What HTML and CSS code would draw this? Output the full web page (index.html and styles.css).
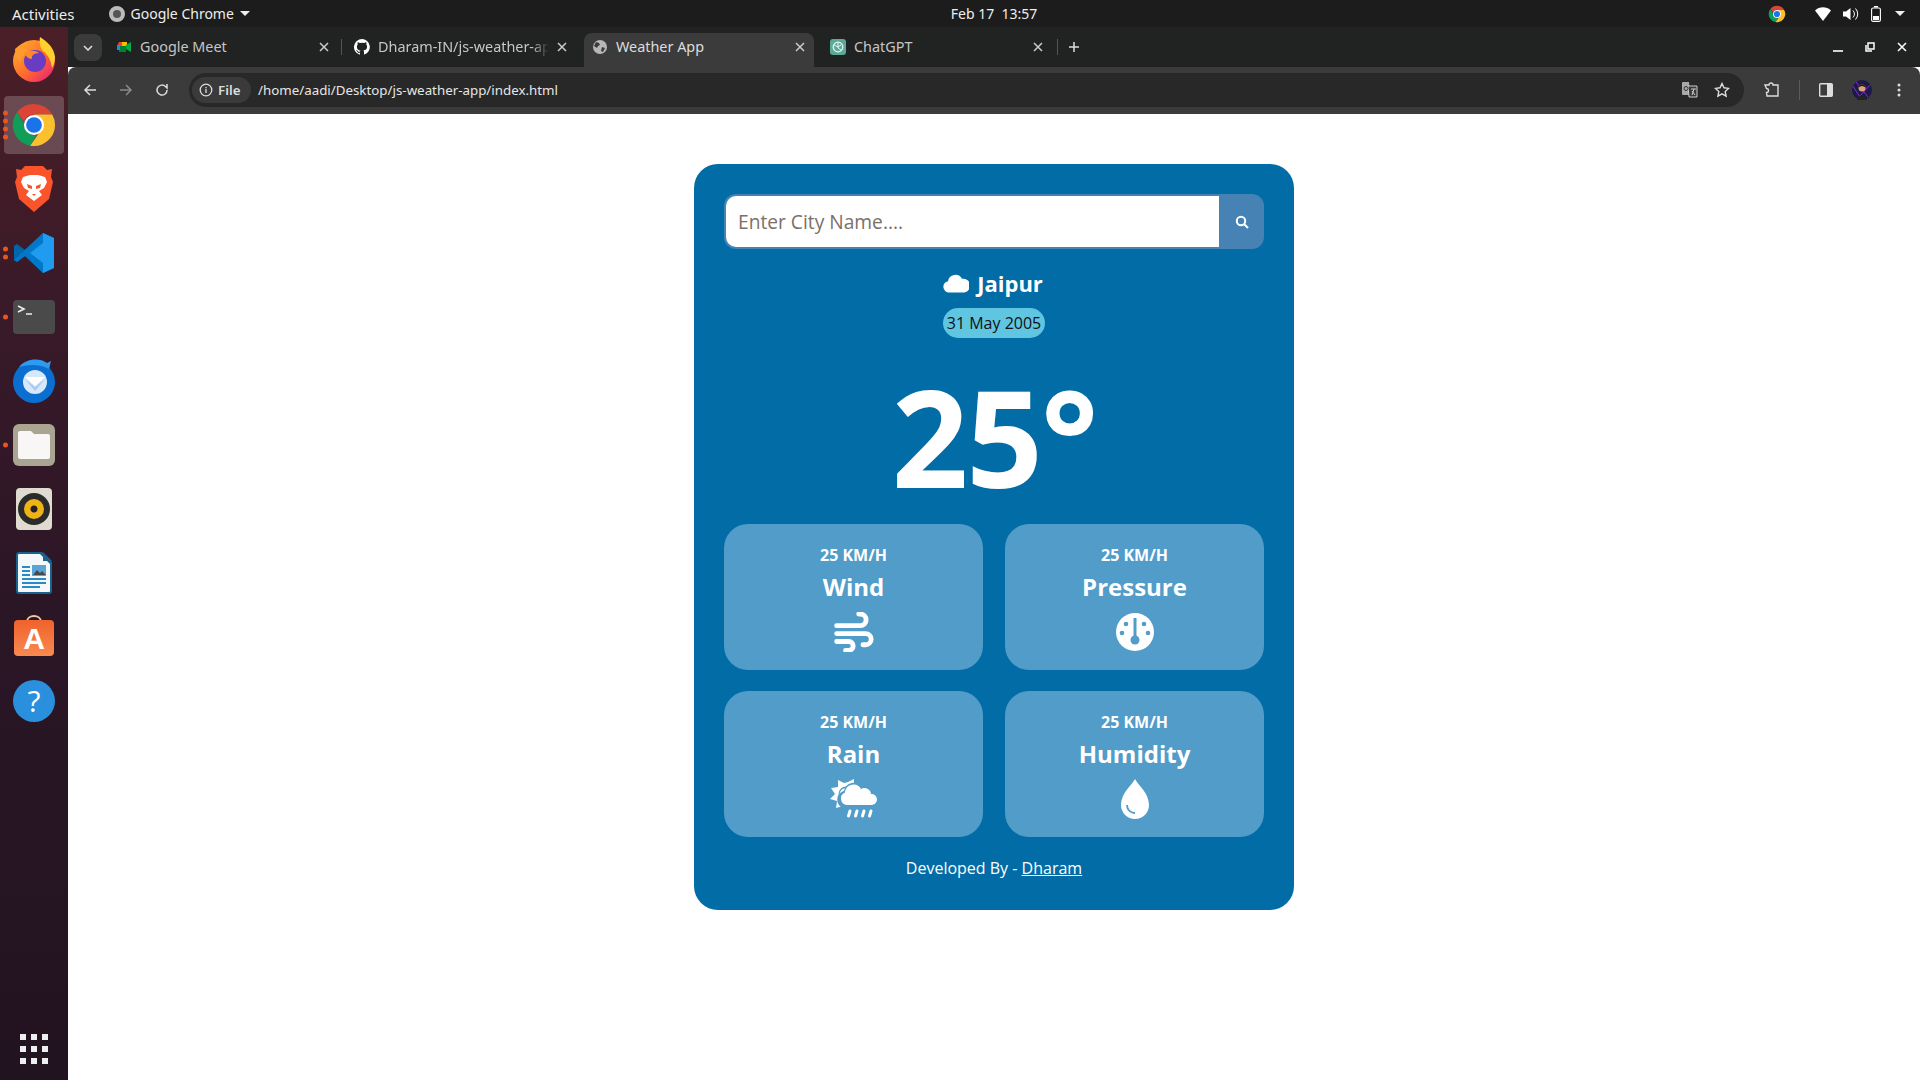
FILE: index.html
```html
<!DOCTYPE html>
<html lang="en">
<head>
    <meta charset="UTF-8">
    <meta name="viewport" content="width=device-width, initial-scale=1.0">
    <title>Weather App</title>
    <link rel="stylesheet" href="styles.css">
</head>
<body>

    <svg class="defs" width="0" height="0">
        <defs>
            <symbol id="chrome" viewBox="0 0 48 48">
                <path fill="#db4437" d="M24 2a22 22 0 0 1 19 11H24a11 11 0 0 0-10.500 7.500L6.500 10.500A22 22 0 0 1 24 2z"/>
                <path fill="#0f9d58" d="M6.500 10.500 15 25a10 10 0 0 0 11.500 9.700L20 45.600A22 22 0 0 1 6.500 10.500z"/>
                <path fill="#fbc02d" d="M43 13a22 22 0 0 1-23 32.600L29.500 32a11 11 0 0 0 .5-13l-6-6z"/>
                <circle cx="24" cy="24" r="10.500" fill="#fff"/>
                <circle cx="24" cy="24" r="8.200" fill="#1a73e8"/>
            </symbol>
            <symbol id="close" viewBox="0 0 10 10">
                <path d="M1 1l8 8M9 1l-8 8" fill="none" stroke="currentColor" stroke-width="1.500"/>
            </symbol>
            <linearGradient id="ff" x1="0" y1="0" x2="1" y2="1">
                <stop offset="0" stop-color="#ffb52e"/>
                <stop offset=".55" stop-color="#ff6a2c"/>
                <stop offset="1" stop-color="#e31587"/>
            </linearGradient>
            <linearGradient id="soft" x1="0" y1="0" x2="0" y2="1">
                <stop offset="0" stop-color="#f0622c"/>
                <stop offset="1" stop-color="#f98a50"/>
            </linearGradient>
        </defs>
    </svg>

    <header class="topbar">
        <span class="top-left">Activities</span>
        <span class="app-menu">
            <span class="app-dot"></span>
            Google Chrome
            <span class="caret"></span>
        </span>
        <span class="clock">Feb 17&nbsp; 13:57</span>
        <span class="tray">
            <svg class="tray-chrome" width="18" height="18"><use href="#chrome"/></svg>
            <svg class="tray-wifi" width="16" height="14" viewBox="0 0 16 14"><path fill="#fff" d="M0 3.500C4.500-.8 11.500-.8 16 3.500L8 14z"/></svg>
            <svg class="tray-vol" width="16" height="14" viewBox="0 0 16 14"><path fill="#fff" d="M0 4.500h3L7.500 1v12L3 9.500H0z"/><path d="M10 3.500a5 5 0 0 1 0 7M12.500 1.500a8 8 0 0 1 0 11" fill="none" stroke="#fff" stroke-width="1"/></svg>
            <svg class="tray-bat" width="10" height="16" viewBox="0 0 10 16"><path fill="#fff" d="M3 0h4v1.500H3z"/><rect x=".6" y="2" width="8.800" height="13.400" rx="1.500" fill="none" stroke="#fff" stroke-width="1.100"/><rect x="2" y="10" width="6" height="4" fill="#fff"/></svg>
            <span class="caret"></span>
        </span>
    </header>

    <div class="desktop">
        <nav class="dock">
            <div class="dock-item">
                <svg class="lift" width="48" height="48" viewBox="0 0 48 48">
                    <circle cx="24" cy="26" r="21" fill="url(#ff)"/>
                    <path fill="#ffd02e" d="M30 2c8 5 14 11 15 20 0 4-1 8-3 11-1-8-4-13-9-17-3-3-4-9-3-14z"/>
                    <path fill="#ff9a2e" d="M5 14c3-3 6-5 9-6-1 4 1 7 5 8-5 2-9 7-8 13-3-4-6-9-6-15z"/>
                    <circle cx="25" cy="26" r="11" fill="#6a3cc4"/>
                    <path fill="#ff8a2c" d="M14 18c5-3 12-3 15 0-5 0-8 3-7 6-3 0-6-2-8-6z"/>
                </svg>
            </div>
            <div class="dock-item active">
                <span class="pips"><i></i><i></i><i></i><i></i></span>
                <svg width="46" height="46"><use href="#chrome"/></svg>
            </div>
            <div class="dock-item">
                <svg width="38" height="48" viewBox="0 0 38 48">
                    <path fill="#fb542b" d="M10 1h18l4 4 5-1-1 8 2 5-4 17-15 13L4 34 0 17l2-5-1-8 5 1z"/>
                    <path fill="#fff" d="M8 12l7-2h8l7 2 2 5-3 6-5 3 3 4-8 6-8-6 3-4-5-3-3-6z"/>
                    <path fill="#fb542b" d="M12 19l5 2v3l-4-1zM26 19l-5 2v3l4-1zM17 29h4l-2 2z"/>
                </svg>
            </div>
            <div class="dock-item">
                <span class="pips"><i></i><i></i></span>
                <svg width="42" height="42" viewBox="0 0 42 42">
                    <path fill="#0065a9" d="M30 1 12 18 4 12 1 14v14l3 2 8-6 18 17z"/>
                    <path fill="#007acc" d="M30 1 41 6v30l-11 5-18-17L4 30l-3-2 29-27z" opacity=".9"/>
                    <path fill="#1f9cf0" d="M30 1l11 5v30l-11 5zM30 11 17 21l13 10z"/>
                </svg>
            </div>
            <div class="dock-item">
                <span class="pips"><i></i></span>
                <div class="term">
                    <svg width="40" height="40" viewBox="0 0 40 40"><path d="M5 6l6 3-6 3M13 14h6" fill="none" stroke="#eee" stroke-width="1.600"/></svg>
                </div>
            </div>
            <div class="dock-item">
                <svg class="lift-small" width="46" height="46" viewBox="0 0 46 46">
                    <circle cx="23" cy="25" r="21" fill="#0a6fd0"/>
                    <path fill="#2f9bf0" d="M8 10c6-8 20-10 28-4l4-2-2 8c-8-5-20-5-30-2z"/>
                    <circle cx="24" cy="25" r="12" fill="#d7e8fb"/>
                    <path fill="#fff" d="M14 20h20l-10 9z"/>
                    <path fill="#a8c8ef" d="M14 22l10 8 10-8-10 12z"/>
                </svg>
            </div>
            <div class="dock-item">
                <span class="pips"><i></i></span>
                <div class="files">
                    <svg width="32" height="28" viewBox="0 0 32 28"><path fill="#f8f7f5" d="M2 0h11l3 3h14a2 2 0 0 1 2 2v21a2 2 0 0 1-2 2H2a2 2 0 0 1-2-2V2a2 2 0 0 1 2-2z"/></svg>
                </div>
            </div>
            <div class="dock-item">
                <div class="rhythm"><span class="rhythm-cone"></span></div>
            </div>
            <div class="dock-item">
                <svg width="36" height="42" viewBox="0 0 36 42">
                    <path fill="#18638c" d="M3 0h23l10 10v29a3 3 0 0 1-3 3H3a3 3 0 0 1-3-3V3a3 3 0 0 1 3-3z"/>
                    <path fill="#f4f8fb" d="M3 2h21l10 10v27a1 1 0 0 1-1 1H3a1 1 0 0 1-1-1V3a1 1 0 0 1 1-1z"/>
                    <path fill="#18638c" d="M27 0l9 9h-9z"/>
                    <path fill="#2b89c4" d="M6 14h8v2H6zM6 18h8v2H6zM6 22h8v2H6zM6 26h24v2H6zM6 30h24v2H6zM6 34h18v2H6z"/>
                    <rect x="16" y="13" width="14" height="11" fill="#5aa5d6"/>
                    <path fill="#4a4a4a" d="M17 23l4-5 3 3 2-2 4 4z"/>
                </svg>
            </div>
            <div class="dock-item">
                <svg class="lift" width="40" height="42" viewBox="0 0 40 42">
                    <path d="M13 8c0-8 14-8 14 0" fill="none" stroke="#e8c9a8" stroke-width="2"/>
                    <rect y="6" width="40" height="36" rx="4" fill="url(#soft)"/>
                    <text x="20" y="35" class="bag-a">A</text>
                </svg>
            </div>
            <div class="dock-item">
                <svg width="42" height="42" viewBox="0 0 42 42">
                    <circle cx="21" cy="21" r="21" fill="#2a8fdc"/>
                    <text x="21" y="32" class="help-q">?</text>
                </svg>
            </div>
            <div class="dock-apps">
                <span></span><span></span><span></span>
                <span></span><span></span><span></span>
                <span></span><span></span><span></span>
            </div>
        </nav>

        <div class="window">
            <div class="tabstrip">
                <span class="tab-list-btn">
                    <svg width="10" height="6" viewBox="0 0 10 6"><path d="M1 1l4 4 4-4" fill="none" stroke="#ddd" stroke-width="1.600"/></svg>
                </span>
                <div class="tab">
                    <svg class="favicon" width="16" height="16" viewBox="0 0 16 16">
                        <path fill="#00832d" d="M3 3h7v10H3z"/><path fill="#ea4335" d="M3 3h5v4H1z"/><path fill="#2684fc" d="M1 6h3v5H1z"/><path fill="#ffba00" d="M6 3h5v4H6z"/><path fill="#00ac47" d="M10 6l5-3v10l-5-3z"/>
                    </svg>
                    <span class="tab-title">Google Meet</span>
                    <svg class="tab-x" width="10" height="10"><use href="#close"/></svg>
                </div>
                <div class="tab sep-left">
                    <svg class="favicon" width="16" height="16" viewBox="0 0 16 16">
                        <path fill="#fff" d="M8 0a8 8 0 0 0-2.500 15.600c.4.100.5-.2.500-.4v-1.400c-2.200.5-2.700-1-2.700-1-.4-.9-.9-1.200-.9-1.200-.7-.5.100-.5.100-.5.800.100 1.200.8 1.200.8.700 1.200 1.900.9 2.300.7.100-.5.300-.9.500-1.100-1.800-.2-3.600-.9-3.600-4 0-.9.300-1.600.8-2.100-.1-.2-.4-1 .1-2.100 0 0 .7-.2 2.200.8a7.600 7.600 0 0 1 4 0c1.500-1 2.200-.8 2.200-.8.400 1.100.2 1.900.1 2.100.5.600.8 1.300.8 2.100 0 3.100-1.900 3.700-3.700 3.900.3.300.6.700.6 1.500v2.200c0 .2.100.5.600.4A8 8 0 0 0 8 0z"/>
                    </svg>
                    <span class="tab-title fade">Dharam-IN/js-weather-app</span>
                    <svg class="tab-x" width="10" height="10"><use href="#close"/></svg>
                </div>
                <div class="tab current">
                    <svg class="favicon" width="16" height="14" viewBox="0 0 14 14">
                        <circle cx="7" cy="7" r="7" fill="#b5b7b9"/>
                        <path fill="#3b3b3b" d="M3 2l3 1 1 2-2 1-1 2-3-2zM9 7l3 1-2 4-2-1z"/>
                    </svg>
                    <span class="tab-title">Weather App</span>
                    <svg class="tab-x" width="10" height="10"><use href="#close"/></svg>
                </div>
                <div class="tab">
                    <svg class="favicon" width="16" height="16" viewBox="0 0 16 16">
                        <rect width="16" height="16" rx="3" fill="#5ba99a"/>
                        <circle cx="8" cy="8" r="4.800" fill="none" stroke="#e8f3f0" stroke-width="1.300"/>
                        <path d="M8 3v6l3 2M4 6l4 2 3-2" fill="none" stroke="#e8f3f0" stroke-width="1"/>
                    </svg>
                    <span class="tab-title">ChatGPT</span>
                    <svg class="tab-x" width="10" height="10"><use href="#close"/></svg>
                </div>
                <span class="tab-sep"></span>
                <svg class="new-tab" width="12" height="12" viewBox="0 0 12 12"><path d="M6 1v10M1 6h10" stroke="#ddd" stroke-width="1.500"/></svg>
                <div class="win-controls">
                    <svg width="10" height="10" viewBox="0 0 10 10"><path d="M0 9h10" stroke="#fff" stroke-width="1.600"/></svg>
                    <svg width="10" height="10" viewBox="0 0 10 10"><path d="M3 1h6v6H3zM1 3v6h6" fill="none" stroke="#fff" stroke-width="1.500"/></svg>
                    <svg width="10" height="10"><use href="#close" color="#fff"/></svg>
                </div>
            </div>

            <div class="toolbar">
                <svg class="nav-ic" width="14" height="14" viewBox="0 0 14 14"><path d="M13 7H2M7 2 2 7l5 5" fill="none" stroke="#ddd" stroke-width="1.500"/></svg>
                <svg class="nav-ic dim" width="14" height="14" viewBox="0 0 14 14"><path d="M1 7h11M7 2l5 5-5 5" fill="none" stroke="#8a8a8a" stroke-width="1.500"/></svg>
                <svg class="nav-ic" width="14" height="14" viewBox="0 0 14 14"><path d="M12 7a5 5 0 1 1-1.500-3.500L12 5V1" fill="none" stroke="#ddd" stroke-width="1.500"/></svg>
                <div class="omnibox">
                    <span class="chip">
                        <svg width="14" height="14" viewBox="0 0 14 14"><circle cx="7" cy="7" r="5.800" fill="none" stroke="#ddd" stroke-width="1.300"/><path d="M7 6v4M7 4v1.200" stroke="#ddd" stroke-width="1.300"/></svg>
                        File
                    </span>
                    <span class="url">/home/aadi/Desktop/js-weather-app/index.html</span>
                    <svg class="omni-ic" width="16" height="16" viewBox="0 0 16 16"><path fill="#a9a9a9" d="M0 1a1 1 0 0 1 1-1h6l1 13H1a1 1 0 0 1-1-1z"/><path fill="#3a3a3a" stroke="#ccc" d="M6 4h9v11H7z"/><circle cx="4" cy="6.500" r="2" fill="none" stroke="#333"/><path d="M9 7h5M12 7l-2 6M10 9l3 4" stroke="#ccc" fill="none"/></svg>
                    <svg class="omni-ic" width="16" height="16" viewBox="0 0 16 16"><path d="M8 1.500l2 4.300 4.600.6-3.400 3.200.9 4.600L8 11.900l-4.100 2.300.9-4.600L1.400 6.400 6 5.800z" fill="none" stroke="#ddd" stroke-width="1.400"/></svg>
                </div>
                <svg class="ext" width="16" height="16" viewBox="0 0 16 16"><path d="M1 3h4a2 2 0 0 1 4 0h5v11H3l-.5-3.500a2 2 0 0 0 0-4z" fill="none" stroke="#ddd" stroke-width="1.400"/></svg>
                <span class="tool-sep"></span>
                <svg class="side" width="14" height="14" viewBox="0 0 14 14"><rect x=".7" y=".7" width="12.600" height="12.600" rx="1" fill="none" stroke="#ddd" stroke-width="1.400"/><path fill="#ddd" d="M8 1h5v12H8z"/></svg>
                <svg class="avatar" width="20" height="20" viewBox="0 0 20 20">
                    <circle cx="10" cy="10" r="10" fill="#1c1a4a"/>
                    <path d="M1 6l8 13M4 2l12 15M18 5 6 18" stroke="#8a2fc4" fill="none"/>
                    <circle cx="10" cy="8" r="3.500" fill="#d9a57c"/>
                    <path fill="#2c1a12" d="M6.500 7.500C6.500 3 13.500 3 13.500 7.500 11 5.500 9 5.500 6.500 7.500z"/>
                    <path fill="#222" d="M5 20c0-6 10-6 10 0z"/>
                </svg>
                <svg class="menu" width="4" height="14" viewBox="0 0 4 14"><circle cx="2" cy="2" r="1.500" fill="#ddd"/><circle cx="2" cy="7" r="1.500" fill="#ddd"/><circle cx="2" cy="12" r="1.500" fill="#ddd"/></svg>
            </div>

            <main class="page">
                <section class="weather">
                    <form class="search">
                        <input type="text" placeholder="Enter City Name....">
                        <button type="button">
                            <svg width="14" height="14" viewBox="0 0 14 14"><circle cx="6" cy="6" r="4.200" fill="none" stroke="#fff" stroke-width="2"/><path d="M9 9l4 4" stroke="#fff" stroke-width="2.200"/></svg>
                        </button>
                    </form>

                    <h2 class="city">
                        <svg width="26" height="20" viewBox="0 0 26 20"><path fill="#fff" d="M6 19.500a5.700 5.700 0 0 1-1-11.300 7.500 7.500 0 0 1 14-2.400 5.500 5.500 0 0 1 2.500 13.700z"/></svg>
                        Jaipur
                    </h2>
                    <span class="date">31 May 2005</span>

                    <div class="temp">25°</div>

                    <div class="stats">
                        <div class="stat">
                            <span class="stat-value">25 KM/H</span>
                            <span class="stat-name">Wind</span>
                            <svg width="40" height="40" viewBox="0 0 38 38"><path d="M2.500 13H25a5.500 5.500 0 0 0 0-11h-1.500M2.500 20.500H30a5.300 5.300 0 0 1 0 10.600h-2.500M2.500 28H14a4.200 4.200 0 0 1 0 8.400h-3" fill="none" stroke="#fff" stroke-width="4.600" stroke-linecap="round"/></svg>
                        </div>
                        <div class="stat">
                            <span class="stat-value">25 KM/H</span>
                            <span class="stat-name">Pressure</span>
                            <svg width="40" height="40" viewBox="0 0 40 40">
                                <circle cx="20" cy="20" r="19" fill="#fff"/>
                                <path d="M20 6v20" stroke="#519cc9" stroke-width="3"/>
                                <circle cx="20" cy="28" r="4.500" fill="#519cc9"/>
                                <circle cx="11" cy="12" r="2.300" fill="#519cc9"/>
                                <circle cx="29" cy="12" r="2.300" fill="#519cc9"/>
                                <circle cx="7" cy="21" r="2.300" fill="#519cc9"/>
                                <circle cx="33" cy="21" r="2.300" fill="#519cc9"/>
                            </svg>
                        </div>
                        <div class="stat">
                            <span class="stat-value">25 KM/H</span>
                            <span class="stat-name">Rain</span>
                            <svg width="48" height="40" viewBox="0 0 48 40">
                                <path fill="#fff" d="M14 4 8 1v7l-7 1 4 6-5 5 7 2-1 7 7-2 4-3L30 8l-6-2V0l-6 3z"/>
                                <circle cx="16" cy="15" r="7.500" fill="#519cc9"/>
                                <path d="M12 20a6 6 0 0 1 4-10" fill="none" stroke="#fff" stroke-width="2"/>
                                <path fill="#519cc9" d="M11 28a9 9 0 0 1 3-16 10 10 0 0 1 18-4 9 9 0 0 1 16 10v10z"/>
                                <path fill="#fff" d="M17 26a6.500 6.500 0 0 1-2-12.500 8.500 8.500 0 0 1 16-3.500 6.500 6.500 0 0 1 10 5 5.500 5.500 0 0 1 1 11z"/>
                                <path d="M20 32l-1.500 5M27 32l-1.500 5M34 32l-1.500 5M41 32l-1.500 5" stroke="#fff" stroke-width="3" stroke-linecap="round"/>
                            </svg>
                        </div>
                        <div class="stat">
                            <span class="stat-value">25 KM/H</span>
                            <span class="stat-name">Humidity</span>
                            <svg width="40" height="40" viewBox="0 0 40 40">
                                <path fill="#fff" d="M20 0c3 6 14 14 14 26a14 14 0 0 1-28 0C6 14 17 6 20 0z"/>
                                <path d="M12 26c0 5 4 8 8 8" fill="none" stroke="#519cc9" stroke-width="1.800"/>
                            </svg>
                        </div>
                    </div>

                    <p class="credit">Developed By - <a href="#">Dharam</a></p>
                </section>
            </main>
        </div>
    </div>

</body>
</html>
```

FILE: styles.css
```css
* {
    box-sizing: border-box;
}
html, body {
    height: 100%;
}
body {
    margin: 0;
    display: flex;
    flex-direction: column;
    height: 1080px;
    overflow: hidden;
    font-family: "Open Sans", "Noto Sans", sans-serif;
    background-color: #fff;
}
.defs {
    position: absolute;
}

/* ubuntu top bar */
.topbar {
    flex: 0 0 27px;
    display: flex;
    align-items: center;
    position: relative;
    padding-left: 12px;
    background-color: #1c1c1c;
    color: #eee;
    font-family: "Noto Sans", sans-serif;
    font-size: 14px;
}
.top-left {
    font-size: 15px;
}
.app-menu {
    display: flex;
    align-items: center;
    margin-left: 34px;
}
.app-dot {
    width: 16px;
    height: 16px;
    margin-right: 6px;
    border-radius: 50%;
    border: 4px solid #bbb;
    background-color: #555;
}
.caret {
    width: 0;
    height: 0;
    margin-left: 6px;
    border-left: 5px solid transparent;
    border-right: 5px solid transparent;
    border-top: 5px solid #eee;
}
.clock {
    position: absolute;
    left: 950px;
    width: 88px;
    text-align: center;
    white-space: nowrap;
}
.tray {
    display: flex;
    align-items: center;
    margin-left: auto;
    padding-right: 15px;
}
.tray-chrome {
    margin-right: 29px;
}
.tray-vol {
    margin: 0 12px;
}
.tray-bat {
    margin-right: 8px;
}

/* dock */
.desktop {
    flex: 1;
    display: flex;
    min-height: 0;
}
.dock {
    flex: 0 0 68px;
    display: flex;
    flex-direction: column;
    align-items: center;
    padding-top: 2px;
    background: linear-gradient(180deg, #4b1f27 0%, #3a1a28 25%, #2b1626 55%, #221320 100%);
}
.dock-item {
    position: relative;
    flex: 0 0 64px;
    width: 60px;
    display: flex;
    align-items: center;
    justify-content: center;
}
.dock-item.active {
    flex-basis: 58px;
    margin: 3px 0;
    background-color: rgba(255, 255, 255, 0.2);
    border-radius: 4px;
}
.lift {
    margin-top: -4px;
}
.lift-small {
    margin-top: -2px;
}
.pips {
    position: absolute;
    left: -1px;
    top: 50%;
    transform: translateY(-50%);
    display: flex;
    flex-direction: column;
    gap: 3px;
}
.pips i {
    width: 5px;
    height: 5px;
    border-radius: 50%;
    background-color: #e95420;
}
.term {
    width: 42px;
    height: 34px;
    border-radius: 4px;
    background-color: #4a4a4a;
    overflow: hidden;
}
.files {
    width: 42px;
    height: 42px;
    display: flex;
    align-items: center;
    justify-content: center;
    border-radius: 6px;
    background-color: #aaa593;
}
.rhythm {
    width: 36px;
    height: 42px;
    display: flex;
    align-items: center;
    justify-content: center;
    border-radius: 4px;
    background-color: #dfdbd0;
}
.rhythm-cone {
    width: 32px;
    height: 32px;
    border-radius: 50%;
    border: 6px solid #2b2b2b;
    background: radial-gradient(circle, #222 0 3px, #eeb417 4px);
}
.bag-a {
    font: bold 30px "Liberation Sans", sans-serif;
    fill: #fff;
    text-anchor: middle;
}
.help-q {
    font: 30px "Open Sans", sans-serif;
    fill: #fff;
    text-anchor: middle;
}
.dock-apps {
    display: grid;
    grid-template-columns: repeat(3, 6px);
    gap: 6px 5px;
    margin-top: auto;
    margin-bottom: 16px;
}
.dock-apps span {
    width: 6px;
    height: 6px;
    background-color: #eee;
}

/* chrome */
.window {
    flex: 1;
    display: flex;
    flex-direction: column;
    min-width: 0;
}
.tabstrip {
    flex: 0 0 40px;
    display: flex;
    align-items: flex-end;
    padding-left: 6px;
    background-color: #202322;
    color: #c6c6c6;
    font-family: "Noto Sans", sans-serif;
    font-size: 14.4px;
}
.tab-list-btn {
    flex: 0 0 28px;
    height: 27px;
    margin: 0 6px 6px 0;
    display: flex;
    align-items: center;
    justify-content: center;
    border-radius: 8px;
    background-color: #3b3b3b;
}
.tab {
    flex: 0 0 230px;
    min-width: 0;
    height: 34px;
    margin-right: 8px;
    display: flex;
    align-items: center;
    padding: 0 9px 7px 8px;
    position: relative;
    border-radius: 8px 8px 0 0;
}
.tab.current {
    background-color: #3b3b3b;
    color: #ddd;
}
.sep-left::before {
    content: "";
    position: absolute;
    left: -5px;
    top: 6px;
    height: 16px;
    border-left: 1px solid #555;
}
.favicon {
    flex-shrink: 0;
    margin-right: 8px;
}
.tab-title {
    flex: 1;
    min-width: 0;
    overflow: hidden;
    white-space: nowrap;
}
.tab-title.fade {
    margin-right: 8px;
    -webkit-mask-image: linear-gradient(90deg, #000 90%, transparent);
    mask-image: linear-gradient(90deg, #000 90%, transparent);
}
.tab-x {
    flex-shrink: 0;
    color: #ccc;
}
.tab-sep {
    height: 16px;
    margin: 0 0 12px -3px;
    border-left: 1px solid #555;
}
.new-tab {
    margin: 0 0 14px 10px;
}
.win-controls {
    display: flex;
    gap: 22px;
    margin: 0 13px 15px auto;
}
.toolbar {
    flex: 0 0 47px;
    display: flex;
    align-items: center;
    padding: 0 0 2px 15px;
    background-color: #3b3b3b;
    border-radius: 8px 8px 0 0;
    color: #ddd;
    font-family: "Noto Sans", sans-serif;
}
.nav-ic {
    margin-right: 22px;
}
.nav-ic:nth-child(3) {
    margin-right: 20px;
}
.omnibox {
    width: 1555px;
    height: 34px;
    display: flex;
    align-items: center;
    padding: 0 14px 0 3px;
    border-radius: 17px;
    background-color: #282828;
    font-size: 13.33px;
}
.chip {
    display: flex;
    align-items: center;
    gap: 5px;
    width: 59px;
    height: 26px;
    padding-left: 7px;
    border-radius: 13px;
    background-color: #3a3a3a;
    font-weight: 600;
}
.url {
    flex: 1;
    margin-left: 7px;
    color: #e6e6e6;
}
.omni-ic {
    margin-left: 16px;
}
.ext {
    margin-left: 20px;
}
.tool-sep {
    height: 20px;
    margin: 0 19px;
    border-left: 1px solid #5c5c5c;
}
.side {
    margin-right: 19px;
}
.menu {
    margin-left: 25px;
}

/* weather card */
.page {
    flex: 1;
    padding-top: 50px;
    background-color: #fff;
    display: flex;
    flex-direction: column;
    align-items: center;
    min-height: 0;
}
.weather {
    width: 600px;
    height: 746px;
    padding: 30px;
    display: flex;
    flex-direction: column;
    align-items: center;
    background-color: #016ca5;
    border-radius: 24px;
    color: #fff;
}
.search {
    width: 100%;
    height: 55px;
    display: flex;
    flex-shrink: 0;
}
.search input {
    flex: 1;
    min-width: 0;
    padding: 0 12px;
    border: 2px solid #4682b4;
    border-right: none;
    border-radius: 12px 0 0 12px;
    outline: none;
    font: 19.2px "Open Sans", sans-serif;
    color: #333;
}
.search input::placeholder {
    color: #7a7068;
}
.search button {
    flex: 0 0 45px;
    display: flex;
    align-items: center;
    justify-content: center;
    padding: 0;
    border: none;
    border-radius: 0 12px 12px 0;
    background-color: #4682b4;
}
.city {
    display: flex;
    align-items: center;
    gap: 8px;
    height: 36px;
    margin: 17px 0 7px -2px;
    font-size: 22px;
    font-weight: 700;
}
.date {
    height: 30px;
    padding: 0 4px;
    border-radius: 15px;
    background-color: #5fc5e0;
    color: #111;
    font-size: 16px;
    line-height: 30px;
}
.temp {
    height: 186px;
    font-size: 134px;
    font-weight: 700;
    letter-spacing: -2px;
    line-height: 196px;
}
.stats {
    display: grid;
    grid-template-columns: 1fr 1fr;
    gap: 20.5px 22px;
    width: 100%;
}
.stat {
    height: 146.5px;
    padding-top: 19px;
    display: flex;
    flex-direction: column;
    align-items: center;
    background-color: #519cc9;
    border-radius: 24px;
}
.stat-value {
    font-size: 16px;
    font-weight: 700;
    line-height: 24px;
}
.stat-name {
    margin: 2.5px 0 6.5px;
    font-size: 24px;
    font-weight: 700;
    line-height: 36px;
}
.credit {
    margin: 19px 0 0;
    font-size: 16px;
    line-height: 24px;
}
.credit a {
    color: #fff;
}
```
